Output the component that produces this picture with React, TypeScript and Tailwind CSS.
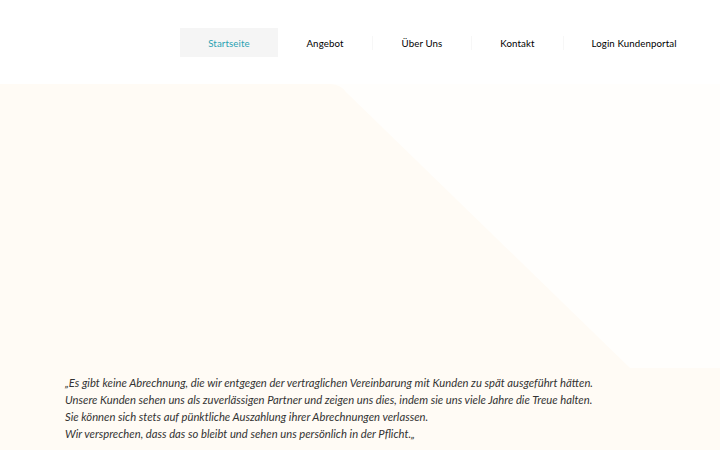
import React from "react";

const items = [
  { label: "Startseite", w: "w-[98px]", active: true },
  { label: "Angebot", w: "w-[94px]" },
  { label: "Über Uns", w: "w-[98px]" },
  { label: "Kontakt", w: "w-[91px]" },
  { label: "Login Kundenportal", w: "w-[140px]" },
];

export default function App() {
  return (
    <div className="w-[720px] h-[450px] overflow-hidden bg-white" style={{ fontFamily: "Lato, 'Noto Sans', sans-serif" }}>
      <header className="h-[84px] flex pt-[28px] pl-[180px]">
        <nav className="flex h-[29px]">
          {items.map((it, i) => (
            <div key={it.label} className="flex items-center">
              {i > 1 && <div className="w-px h-[14px] bg-[#f7f7f7]" />}
              <a
                className={`${it.w} h-[29px] pt-[2px] flex items-center justify-center text-[9.7px] tracking-[0.1px] ${it.active ? "bg-[#f5f5f5] text-[#2aa2b3]" : "text-[#000]"}`}
              >
                {it.label}
              </a>
            </div>
          ))}
        </nav>
      </header>
      <section className="relative h-[366px] bg-[#fffbf5]">
        <svg className="absolute inset-0" width="720" height="366" viewBox="0 0 720 366">
          <path d="M330 0 L720 0 L720 284 L630 284 L346 8 Q340 0 330 0 Z" fill="#fffefc" />
        </svg>
        <div className="relative pt-[290px] pl-[65px] text-[11.25px] leading-[17px] italic text-[#333]">
          <p>„Es gibt keine Abrechnung, die wir entgegen der vertraglichen Vereinbarung mit Kunden zu spät ausgeführt hätten.</p>
          <p>Unsere Kunden sehen uns als zuverlässigen Partner und zeigen uns dies, indem sie uns viele Jahre die Treue halten.</p>
          <p>Sie können sich stets auf pünktliche Auszahlung ihrer Abrechnungen verlassen.</p>
          <p>Wir versprechen, dass das so bleibt und sehen uns persönlich in der Pflicht.„</p>
        </div>
      </section>
    </div>
  );
}
